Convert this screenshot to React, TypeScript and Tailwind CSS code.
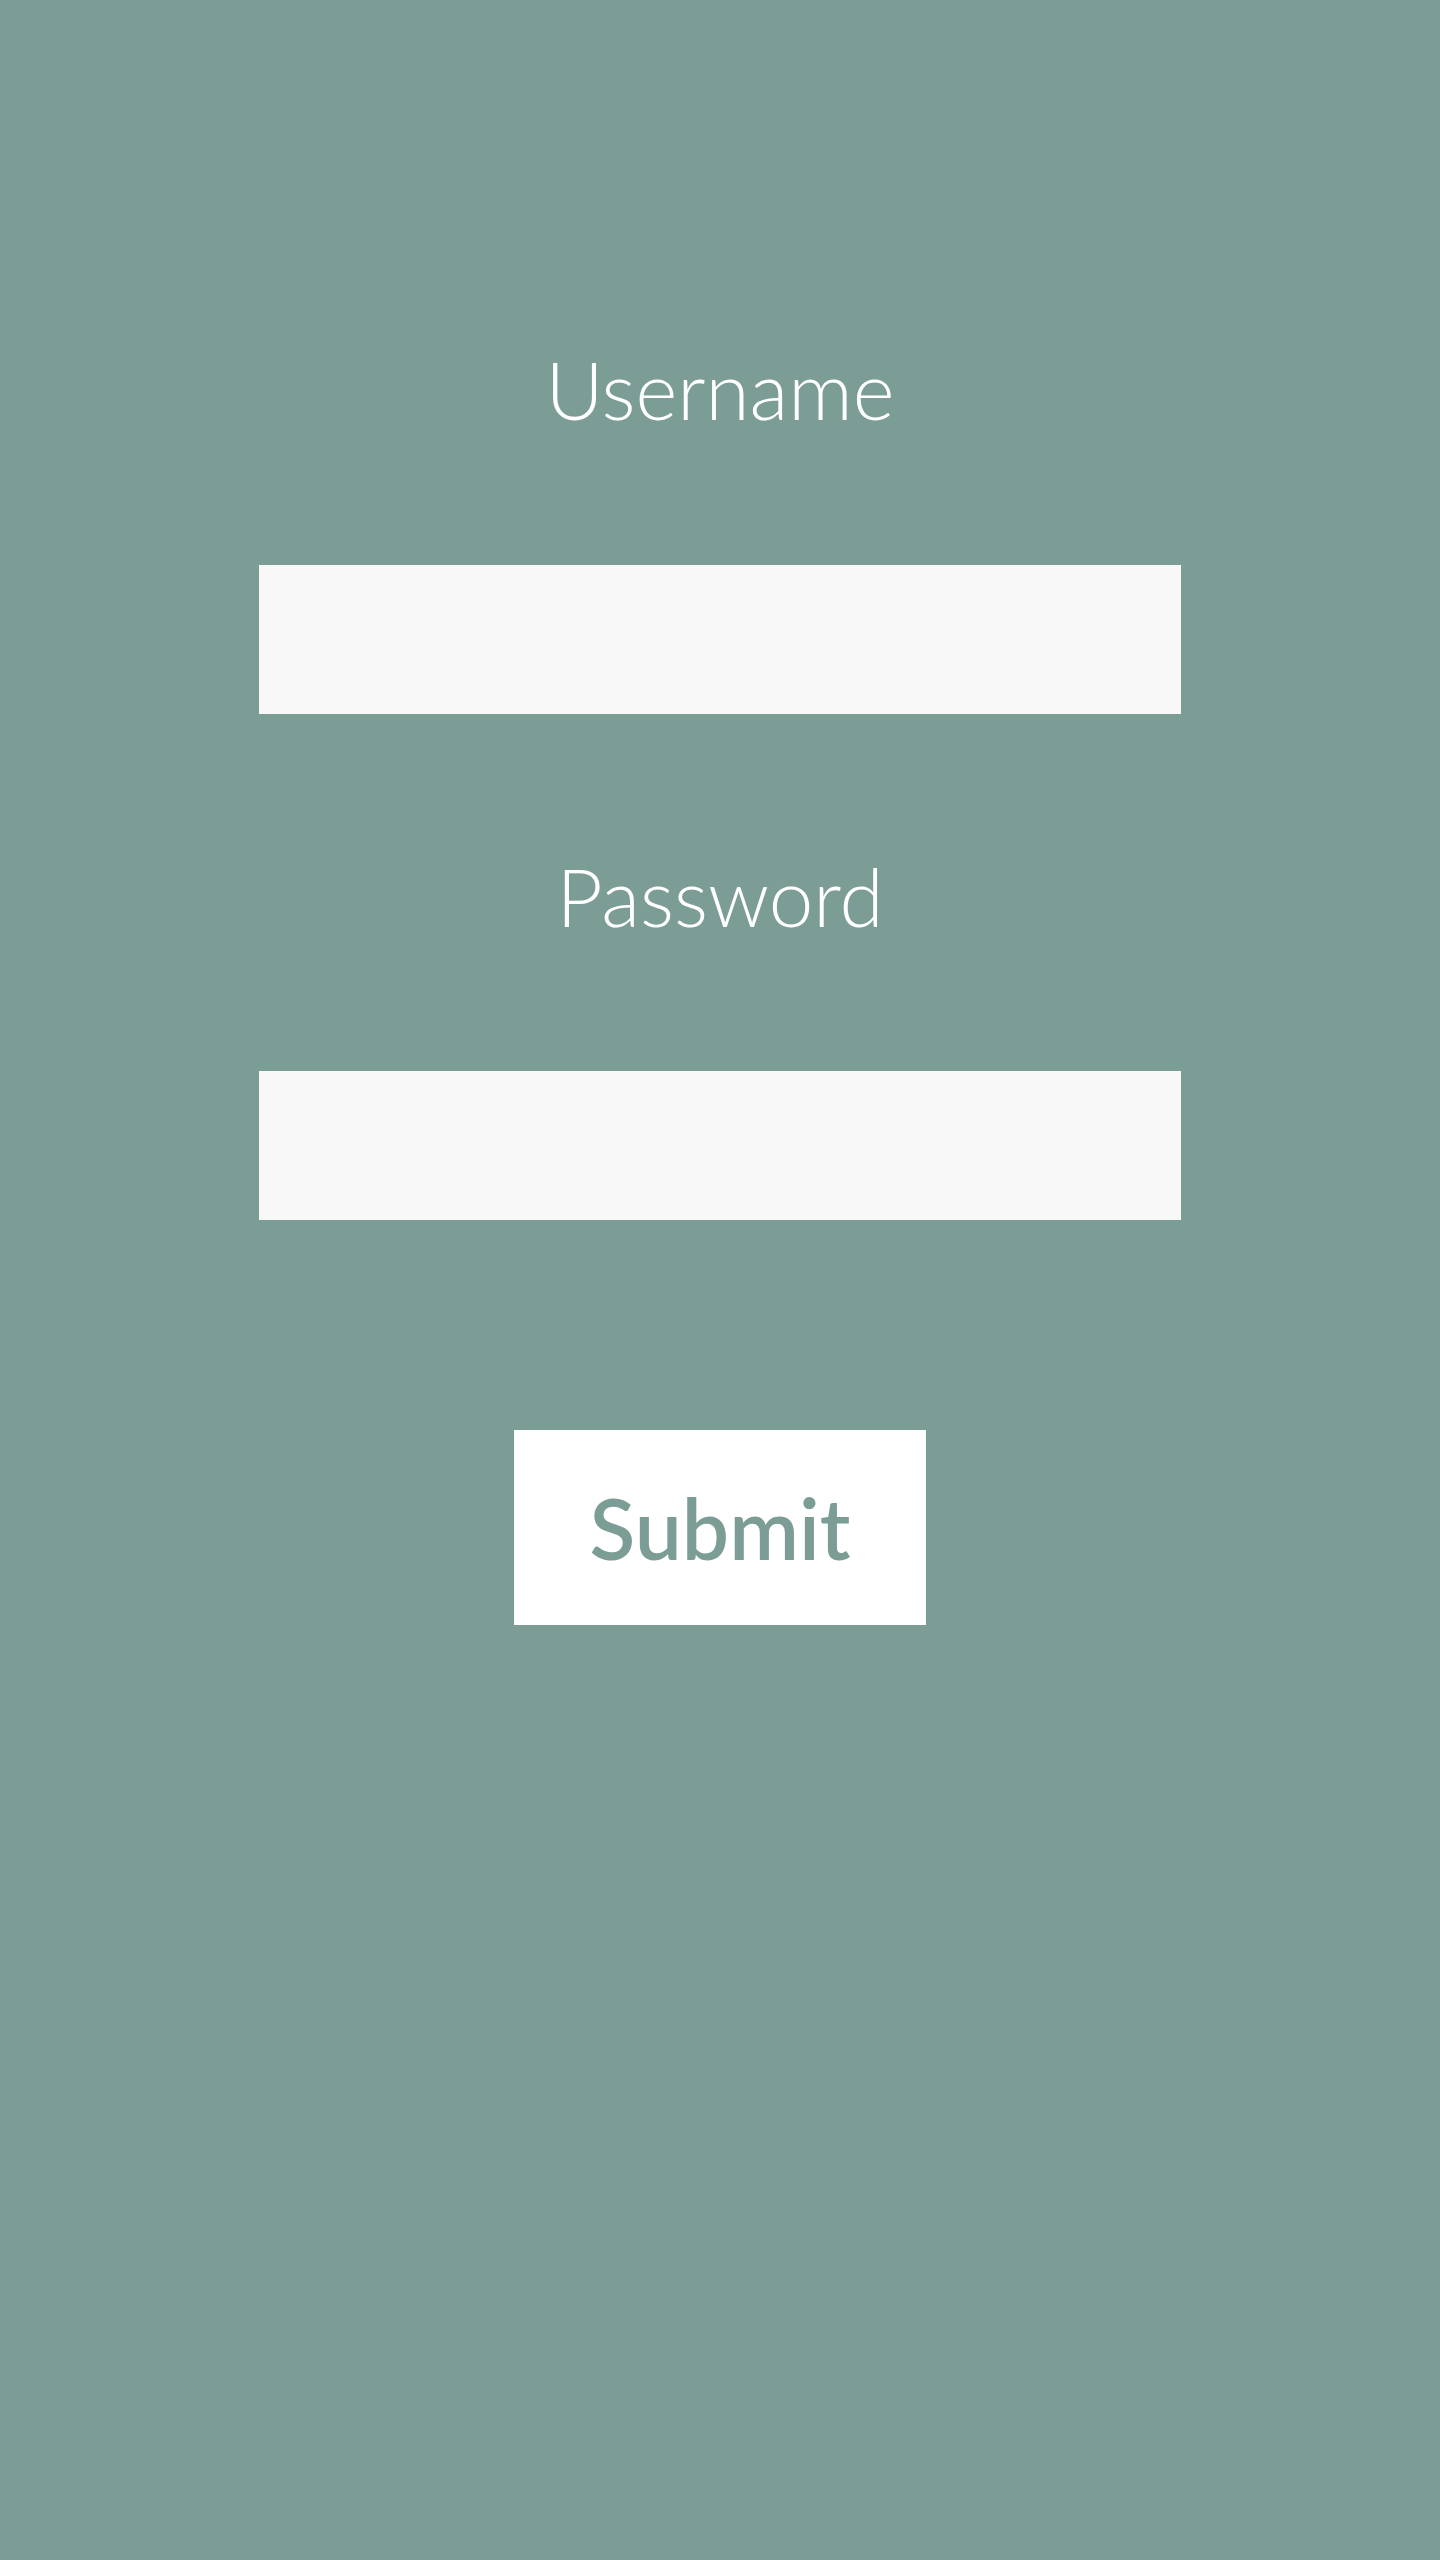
export default function App() {
  return (
    <div className="min-h-screen bg-[#7b9d95] font-['Lato','Open_Sans','Liberation_Sans',sans-serif]">
      <form className="flex flex-col items-center pt-[349px]">
        <label className="text-[80px] leading-none font-light text-white">Username</label>
        <input type="text" className="mt-[136px] h-[149px] w-[922px] bg-[#f8f8f8] outline-none" />
        <label className="mt-[142px] text-[80px] leading-none font-light text-white">Password</label>
        <input type="password" className="mt-[135px] h-[149px] w-[922px] bg-[#f8f8f8] outline-none" />
        <button type="button" className="mt-[210px] flex h-[195px] w-[412px] items-center justify-center bg-white text-[84px] leading-none font-semibold text-[#7b9d95]">
          Submit
        </button>
      </form>
    </div>
  );
}
